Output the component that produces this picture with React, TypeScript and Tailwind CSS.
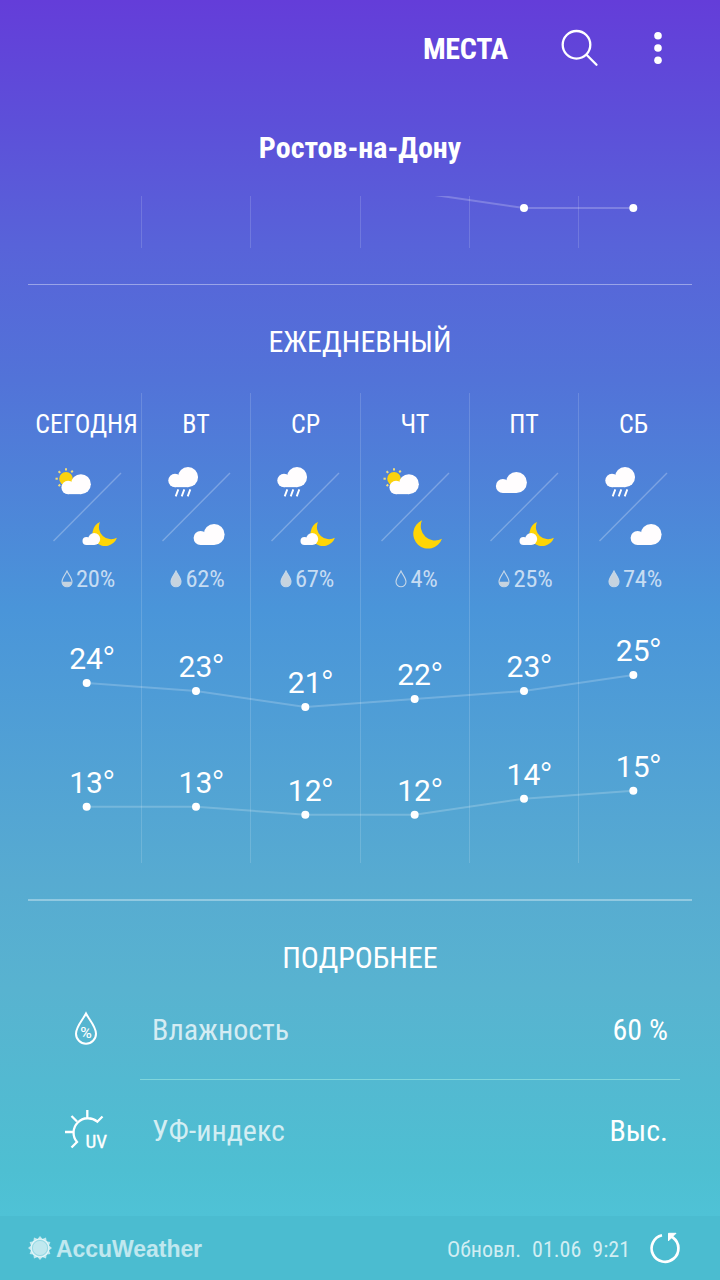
import React from 'react';

type DayIcon = 'partlySunny' | 'rain' | 'cloudy';
type NightIcon = 'cloudyMoon' | 'clearMoon' | 'cloudy';
type DropLevel = 'empty' | 'half' | 'full';

interface Day {
  name: string;
  day: DayIcon;
  night: NightIcon;
  chance: number;
  drop: DropLevel;
  high: number;
  low: number;
}

const days: Day[] = [
  { name: 'СЕГОДНЯ', day: 'partlySunny', night: 'cloudyMoon', chance: 20, drop: 'half', high: 24, low: 13 },
  { name: 'ВТ', day: 'rain', night: 'cloudy', chance: 62, drop: 'full', high: 23, low: 13 },
  { name: 'СР', day: 'rain', night: 'cloudyMoon', chance: 67, drop: 'full', high: 21, low: 12 },
  { name: 'ЧТ', day: 'partlySunny', night: 'clearMoon', chance: 4, drop: 'empty', high: 22, low: 12 },
  { name: 'ПТ', day: 'cloudy', night: 'cloudyMoon', chance: 25, drop: 'half', high: 23, low: 14 },
  { name: 'СБ', day: 'rain', night: 'cloudy', chance: 74, drop: 'full', high: 25, low: 15 },
];

const COLUMN = 656 / 6;
const SEPARATORS = [109, 218, 328, 437, 546];
const columnX = (i: number) => COLUMN * (i + 0.5);

const Cloud: React.FC<{ x: number; y: number; scale?: number }> = ({ x, y, scale = 1 }) => (
  <g transform={`translate(${x} ${y}) scale(${scale})`} fill="#fffdfe">
    <circle cx="20.5" cy="10.5" r="10.5" />
    <circle cx="7" cy="14" r="7" />
    <rect x="7" y="10" width="13.5" height="11" />
  </g>
);

const Moon: React.FC<{ x: number; y: number; scale?: number }> = ({ x, y, scale = 1 }) => (
  <path
    transform={`translate(${x} ${y}) scale(${scale})`}
    d="M9 0A14.8 14.8 0 1 0 29 18.5A14.4 14.4 0 0 1 9 0z"
    fill="#ffd506"
  />
);

const sunRays = [0, 40, 180, 225, 270, 315];

const DayNight: React.FC<{ day: DayIcon; night: NightIcon }> = ({ day, night }) => (
  <svg width="109" height="90" viewBox="0 0 109 90" className="block">
    <path d="M21.5 76L89 8" stroke="#fff" strokeOpacity="0.26" strokeWidth="1.4" />
    {day === 'partlySunny' && (
      <>
        <circle cx="34" cy="13.7" r="6.8" fill="#fbd20d" />
        {sunRays.map((a) => (
          <path key={a} d="M34 5.5V3.2" stroke="#f0dc7c" strokeWidth="2" transform={`rotate(${a} 34 13.7)`} />
        ))}
        <Cloud x={29.4} y={9.2} scale={0.95} />
      </>
    )}
    {day === 'rain' && (
      <>
        <Cloud x={27.3} y={2} scale={0.96} />
        <path d="M37.3 24.3l-2.6 7M43.3 24.3l-2.6 7M49.3 24.3l-2.6 7" stroke="#fff" strokeWidth="1.9" />
      </>
    )}
    {day === 'cloudy' && <Cloud x={26.9} y={7} />}
    {night === 'cloudyMoon' && (
      <>
        <Moon x={60.3} y={57} scale={0.85} />
        <Cloud x={50.5} y={68} scale={0.57} />
      </>
    )}
    {night === 'clearMoon' && <Moon x={53} y={55.3} />}
    {night === 'cloudy' && <Cloud x={52.6} y={59} />}
  </svg>
);

const DROP = 'M6 1C7.5 4.4 11 8.2 11 11.8A5 5 0 0 1 1 11.8C1 8.2 4.5 4.4 6 1z';

const Drop: React.FC<{ level: DropLevel }> = ({ level }) => (
  <svg width="12" height="18" viewBox="0 0 12 18" className="block">
    <path d={DROP} fill={level === 'full' ? '#c6d3df' : 'none'} stroke="#c6d7e8" strokeWidth="1.1" />
    {level === 'half' && <path d="M1 11.8H11A5 5 0 0 1 1 11.8z" fill="#c6d3df" />}
  </svg>
);

const Series: React.FC<{ values: number[]; toY: (t: number) => number }> = ({ values, toY }) => (
  <g>
    <polyline
      points={values.map((t, i) => `${columnX(i)},${toY(t)}`).join(' ')}
      fill="none"
      stroke="#fff"
      strokeOpacity="0.2"
      strokeWidth="2"
    />
    {values.map((t, i) => (
      <g key={i} fill="#fff">
        <circle cx={columnX(i)} cy={toY(t)} r="4" />
        <text x={columnX(i) + 5.7} y={toY(t) - 13.6} textAnchor="middle" fontSize="30">
          {t}
          <tspan dx="-1" dy="4" fontSize="36" fontWeight="300">°</tspan>
        </text>
      </g>
    ))}
  </g>
);

const TemperatureChart: React.FC = () => (
  <svg width="656" height="264" viewBox="0 0 656 264" className="block font-[Roboto,sans-serif] font-stretch-normal">
    {SEPARATORS.map((x) => (
      <rect key={x} x={x} y="0" width="1" height="264" fill="#fff" fillOpacity="0.15" />
    ))}
    <Series values={days.map((d) => d.high)} toY={(t) => 84 - (t - 24) * 8} />
    <Series values={days.map((d) => d.low)} toY={(t) => 207.7 - (t - 13) * 8} />
  </svg>
);

const HumidityIcon: React.FC = () => (
  <svg width="46" height="42" viewBox="0 0 46 42" className="block">
    <path d="M23 4.5C26 10.5 33 17.5 33 24.7A10 10 0 0 1 13 24.7C13 17.5 20 10.5 23 4.5z" fill="none" stroke="#fff" strokeWidth="2" />
    <text x="23" y="28.5" textAnchor="middle" fontSize="15" fill="#fff" textLength="12" lengthAdjust="spacingAndGlyphs">%</text>
  </svg>
);

const UvIcon: React.FC = () => (
  <svg width="46" height="42" viewBox="0 0 46 42" className="block">
    <path
      d="M39.5 6.5L34.3 11.7A14.4 14.4 0 0 0 14 32L8.5 37.5M24.3 0V7.5M8.5 6L14 11.5M2 22H10"
      fill="none"
      stroke="#fff"
      strokeWidth="2.3"
    />
    <text x="22.5" y="37.8" fontSize="17.5" fill="#fff" stroke="#fff" strokeWidth="0.3" textLength="21.5" lengthAdjust="spacingAndGlyphs">UV</text>
  </svg>
);

const DetailRow: React.FC<{ icon: React.ReactNode; label: string; value: string }> = ({ icon, label, value }) => (
  <div className="flex h-[100px] items-center pt-0.5 pr-[52px] pl-[63px] text-[30px] leading-none">
    {icon}
    <span className="ml-[43px] flex-1 text-white/75">{label}</span>
    <span>{value}</span>
  </div>
);

const AccuWeatherLogo: React.FC = () => (
  <div className="flex items-center gap-1 text-white/65">
    <svg width="24" height="24" viewBox="0 0 24 24" fill="currentColor">
      {[0, 30, 60].map((a) => (
        <path
          key={a}
          d="M12 0l3 3.6h-6zM12 24l3-3.6h-6zM0 12l3.6-3v6zM24 12l-3.6-3v6z"
          transform={`rotate(${a} 12 12)`}
        />
      ))}
      <circle cx="12" cy="12" r="9.4" />
      <circle cx="12" cy="12" r="7.6" fill="none" stroke="#4bbcd0" strokeOpacity="0.5" strokeWidth="0.7" />
    </svg>
    <span className="pt-0.5 font-['Liberation_Sans',sans-serif] text-[23px] leading-none font-bold tracking-[-0.05px]">AccuWeather</span>
  </div>
);

export default function App() {
  return (
    <div className="flex h-[1280px] w-[720px] flex-col overflow-hidden bg-[linear-gradient(180deg,#643dd9_0px,#5d4fd9_120px,#5863d9_245px,#5273d8_380px,#4a95d9_610px,#57abd1_880px,#58b3d0_990px,#4ebfd2_1170px,#4fc2d6_1216px)] font-['Roboto_Condensed',Roboto,sans-serif] text-white font-stretch-condensed">
      <header className="flex h-24 shrink-0 items-center pr-[54px]">
        <span className="mt-0.5 ml-auto text-[30px] leading-none font-bold tracking-[-0.3px]">МЕСТА</span>
        <svg width="40" height="40" viewBox="0 0 40 40" className="ml-[52px]" fill="none" stroke="#fff" strokeWidth="2.3" strokeLinecap="round">
          <circle cx="16.5" cy="16.8" r="13.8" />
          <path d="M26.5 26.8L36.5 36.8" />
        </svg>
        <svg width="16" height="34" viewBox="0 0 16 34" className="ml-[50px]" fill="#fff">
          <circle cx="8" cy="4.7" r="3.8" />
          <circle cx="8" cy="17" r="3.8" />
          <circle cx="8" cy="29.3" r="3.8" />
        </svg>
      </header>

      <h1 className="flex h-[100px] shrink-0 items-center justify-center pt-1 text-[30px] leading-none font-bold">Ростов-на-Дону</h1>

      <svg width="656" height="52" viewBox="0 0 656 52" className="mx-8 block shrink-0">
        {SEPARATORS.map((x) => (
          <rect key={x} x={x} y="0" width="1" height="52" fill="#fff" fillOpacity="0.15" />
        ))}
        <path d="M382 -4L492 12H601.3" fill="none" stroke="#fff" strokeOpacity="0.22" strokeWidth="2" />
        <circle cx="492" cy="12" r="4" fill="#fff" />
        <circle cx="601.3" cy="12" r="4" fill="#fff" />
      </svg>

      <section className="mx-7 mt-9 border-t border-white/40 px-1">
        <h2 className="flex h-[108px] items-center justify-center pt-1.5 text-[30px] leading-none">ЕЖЕДНЕВНЫЙ</h2>
        <div className="grid grid-cols-[109px_109px_110px_109px_109px_110px]">
          {days.map((d, i) => (
            <div key={d.name} className={`flex h-[206px] flex-col ${i > 0 ? 'border-l border-white/15' : ''}`}>
              <div className="flex h-[61px] items-center justify-center pt-px text-[26px] leading-none whitespace-nowrap">{d.name}</div>
              <div className={`mt-[11px] ${i > 0 ? '-ml-px' : ''}`}>
                <DayNight day={d.day} night={d.night} />
              </div>
              <div className="mt-[11px] flex items-center justify-center gap-[3px] pl-[3px] text-[24.5px] leading-[26px] text-white/70">
                <Drop level={d.drop} />
                <span className="tracking-[-0.2px]">{d.chance}%</span>
              </div>
            </div>
          ))}
        </div>
        <TemperatureChart />
      </section>

      <section className="mx-7 mt-9 border-t-2 border-white/35">
        <h2 className="flex h-[78px] items-end justify-center text-[30px] leading-[43px]">ПОДРОБНЕЕ</h2>
      </section>
      <DetailRow icon={<HumidityIcon />} label="Влажность" value="60 %" />
      <div className="mr-10 ml-[140px] h-px shrink-0 bg-[#7fd6dc]" />
      <DetailRow icon={<UvIcon />} label="УФ-индекс" value="Выс." />

      <footer className="mt-auto flex h-16 shrink-0 items-center justify-between bg-[#4bbcd0] pr-[38px] pl-[28px]">
        <AccuWeatherLogo />
        <div className="flex items-center text-[22px] leading-none text-white/75">
          <span className="pt-[3px]">Обновл.</span>
          <span className="ml-[11px] pt-[3px]">01.06</span>
          <span className="ml-[11px] pt-[3px]">9:21</span>
          <svg width="34" height="34" viewBox="0 0 34 34" className="ml-[18px]" fill="none" stroke="#fff" strokeWidth="2.7">
            <path d="M14 4.3A13.4 13.4 0 1 0 25 6.6L22.3 5" />
            <path d="M20.5 2.3H28L20.5 9.8z" fill="#fff" strokeWidth="1" />
          </svg>
        </div>
      </footer>
    </div>
  );
}
